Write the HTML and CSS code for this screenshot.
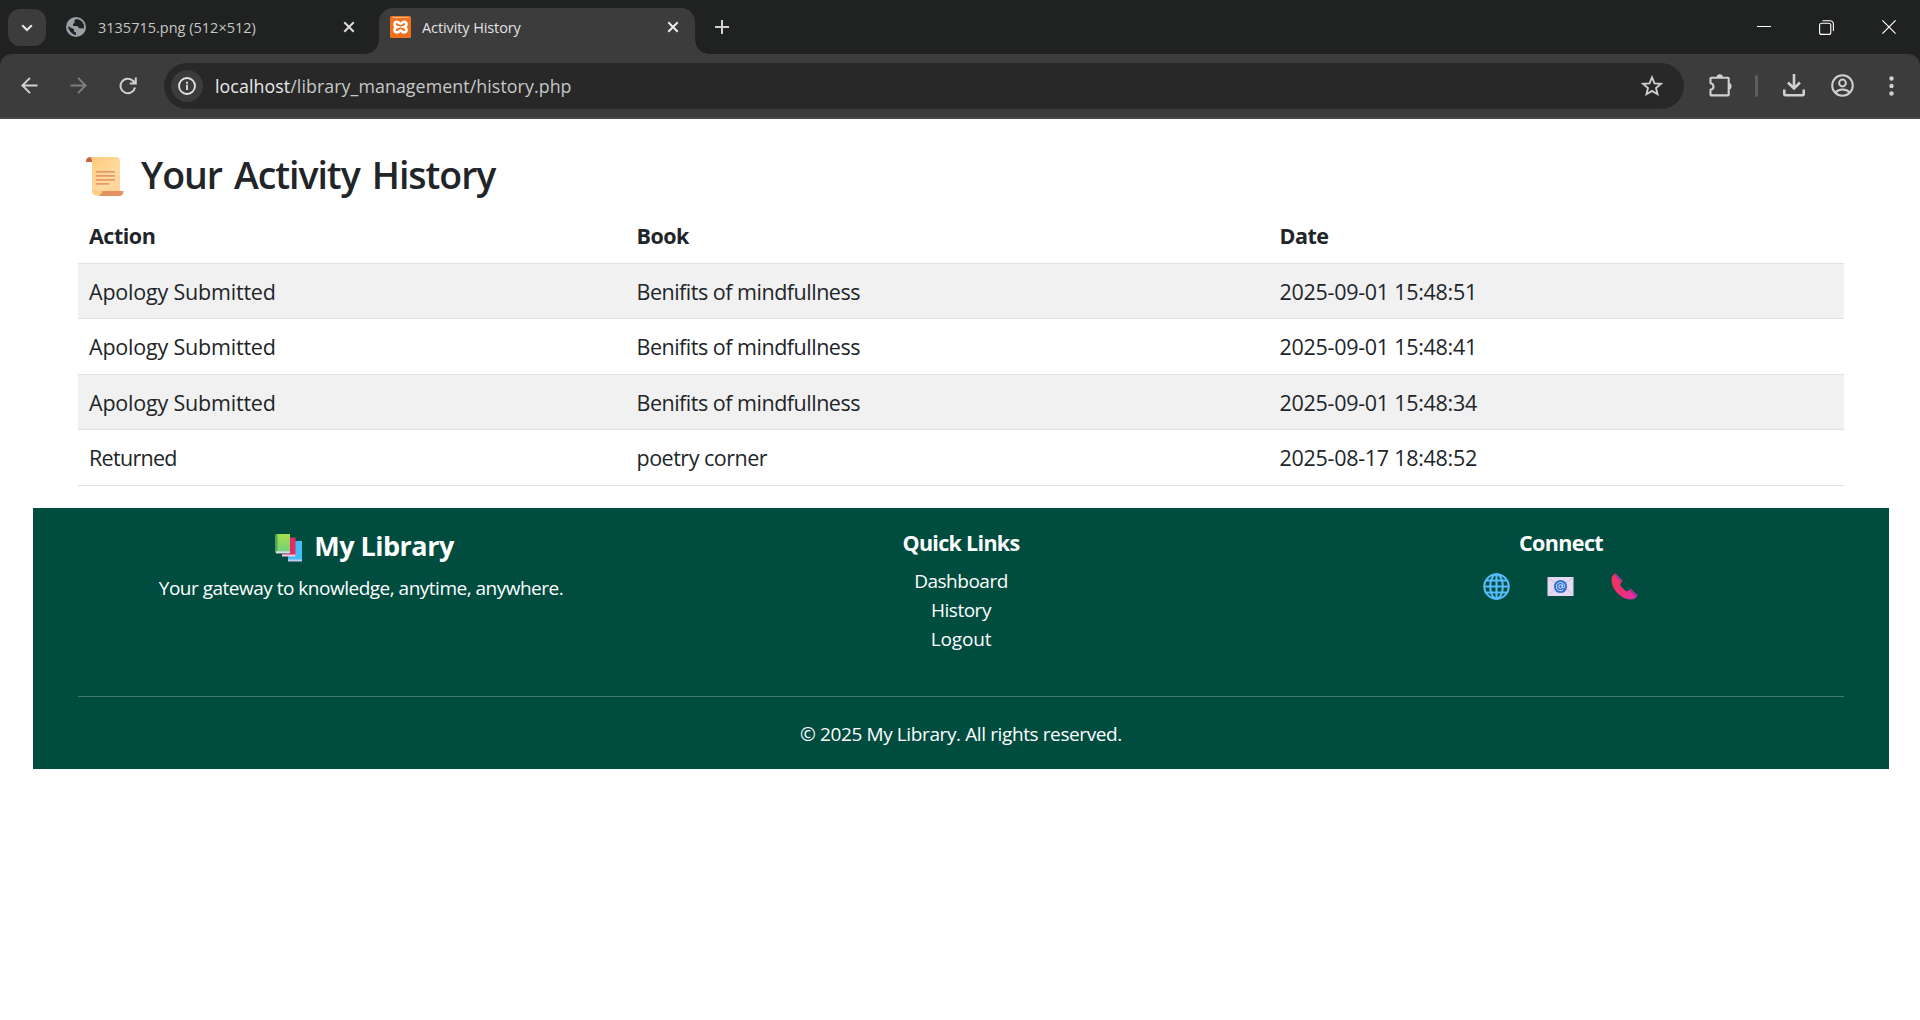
FILE: index.html
```html
<!DOCTYPE html>
<html lang="en">
<head>
<meta charset="utf-8">
<title>Activity History</title>
<link rel="stylesheet" href="styles.css">
</head>
<body>
<div class="tabstrip">
  <button class="tab-search"><svg width="12" height="8" viewBox="0 0 12 8"><path d="M1.2 1.2 6 6l4.800-4.800" fill="none" stroke="#e3e3e3" stroke-width="2.200"/></svg></button>
  <div class="tab">
    <svg class="favicon" width="20" height="20" viewBox="0 0 20 20"><circle cx="10" cy="10" r="10" fill="#9aa0a6"/><path d="M10.500 2C9 2.500 8 3.500 8.500 5c.3 1-.5 1.500-1.500 2L7.200 9h3.300c1.500 0 2.300 1 2.300 2.200h1.600c1.500 0 3 .6 3.600-.2A8 8 0 0 0 10.500 2ZM2 9.200C2.500 13 6 17.500 10 18v-2.500c-1.400 0-2-1-2-2v-1.200Z" fill="#202221"/></svg>
    <span class="tab-title">3135715.png (512×512)</span>
    <svg class="tab-close" width="12" height="12" viewBox="0 0 12 12"><path d="m1.300 1.300 9.400 9.400m0-9.400-9.400 9.400" stroke="#dcdcdc" stroke-width="2"/></svg>
  </div>
  <div class="tab tab-active">
    <svg class="favicon" width="21" height="22" viewBox="0 0 21 22"><rect width="21" height="22" rx="1.500" fill="#f0701c"/><path d="M2.500 1.500h16" stroke="#f7b58a" stroke-width="1.200"/><path d="M7.600 6C3.600 5 3.600 10 7 11c-3.600 1-3.200 6.200.6 5.300 1.800-.4 1.700-1.700 2.900-1.700s1.100 1.300 2.900 1.700c3.800.9 4.200-4.300.6-5.300 3.400-1 3.400-6-.6-5-1.800.4-1.700 1.800-2.900 1.800S9.400 6.400 7.600 6Z" fill="none" stroke="#fff" stroke-width="2.600"/></svg>
    <span class="tab-title tab-title-active">Activity History</span>
    <svg class="tab-close" width="12" height="12" viewBox="0 0 12 12"><path d="m1.300 1.300 9.400 9.400m0-9.400-9.400 9.400" stroke="#eee" stroke-width="2"/></svg>
  </div>
  <svg class="new-tab" width="14" height="14" viewBox="0 0 14 14"><path d="M7 0v14M0 7h14" stroke="#d0d0d0" stroke-width="2"/></svg>
  <div class="window-controls">
    <svg width="14" height="14" viewBox="0 0 14 14"><path d="M0 6.500h14" stroke="#fff"/></svg>
    <svg width="15" height="15" viewBox="0 0 15 15" fill="none" stroke="#fff" stroke-width="1.100"><rect x=".6" y="3.200" width="11.200" height="11.200" rx="2"/><path d="M3.500.7h7.300a3.600 3.600 0 0 1 3.600 3.600v6.800"/></svg>
    <svg width="14" height="14" viewBox="0 0 14 14"><path d="m.4.4 13.200 13.200m0-13.200L.4 13.600" stroke="#fff" stroke-width="1.200"/></svg>
  </div>
</div>
<div class="toolbar">
  <svg class="nav-back" width="17" height="17" viewBox="0 0 17 17" fill="none" stroke="#d0d0d0" stroke-width="2"><path d="M16.500 8.500H1.700M9 .9 1.400 8.500 9 16.100"/></svg>
  <svg class="nav-forward" width="17" height="17" viewBox="0 0 17 17" fill="none" stroke="#7d7d7d" stroke-width="2"><path d="M.5 8.500h14.800M8 .9l7.600 7.600L8 16.100"/></svg>
  <svg class="nav-reload" width="18" height="18" viewBox="0 0 18 18" fill="none" stroke="#d0d0d0" stroke-width="2"><path d="M16 10.500A7.300 7.300 0 1 1 14.200 4L16 6M16.800.5v6h-6"/></svg>
  <div class="omnibox">
    <span class="site-info"><svg width="18" height="18" viewBox="0 0 18 18"><circle cx="9" cy="9" r="8" fill="none" stroke="#e3e3e3" stroke-width="1.800"/><path d="M9 7.800V13M9 4.700v2" stroke="#e3e3e3" stroke-width="1.800"/></svg></span>
    <span class="url"><span class="url-host">localhost</span>/library_management/history.php</span>
    <svg class="star" width="22" height="21" viewBox="0 0 22 21"><path d="m11 2.300 2.500 6 6.400.5-4.900 4.200 1.500 6.200-5.500-3.300-5.500 3.300L7 13 2.100 8.800l6.400-.5Z" fill="none" stroke="#d0d0d0" stroke-width="1.800"/></svg>
  </div>
  <svg class="extensions" width="23" height="23" viewBox="0 0 23 23"><path d="M2.300 3.800H19q.7 0 .7.800v16q0 .8-.8.800H2.300q-.8 0-.8-.8v-4.800c4-.7 4-5.900 0-6.600V4.600q0-.8.800-.8Z" fill="none" stroke="#d0d0d0" stroke-width="2.100" stroke-linejoin="round"/><path d="M7.500 3.800a3.300 3.500 0 0 1 6.600 0ZM20 9a2.500 3.300 0 0 1 0 6.600Z" fill="#d0d0d0"/></svg>
  <span class="divider"></span>
  <svg class="download" width="22" height="23" viewBox="0 0 22 23" fill="none" stroke="#d0d0d0" stroke-width="2.600"><path d="M11 0v14M5 8.500l6 6 6-6M1.300 15.500v4.700q0 1 1 1h17.400q1 0 1-1v-4.700"/></svg>
  <svg class="profile" width="23" height="23" viewBox="0 0 23 23" fill="none" stroke="#d0d0d0" stroke-width="2"><circle cx="11.500" cy="11.500" r="10.300"/><circle cx="11.500" cy="9" r="3.400"/><path d="M4.300 18.500c4-4 10.400-4 14.400 0"/></svg>
  <svg class="menu" width="5" height="20" viewBox="0 0 5 20" fill="#d0d0d0"><circle cx="2.500" cy="2.500" r="2.200"/><circle cx="2.500" cy="10" r="2.200"/><circle cx="2.500" cy="17.500" r="2.200"/></svg>
</div>

<main class="content">
  <h2 class="heading">
    <svg class="scroll" width="38" height="39" viewBox="0 0 38 39">
      <defs><linearGradient id="paper" x1="0" y1="0" x2="1" y2="1"><stop offset="0" stop-color="#ffc97a"/><stop offset=".6" stop-color="#ffdaa0"/><stop offset="1" stop-color="#ffd292"/></linearGradient></defs>
      <path d="M0 4.500C0 1.500 1.500 0 5 0h6v5H0Z" fill="#c9633f"/>
      <path d="M4 0h26q4 0 4 4.500V34q0 4-3 4H11q-5 0-5-5V5Q6 1 4 0Z" fill="url(#paper)"/>
      <path d="M16 34h21.500q0 5-4.500 5H11q4-.5 5-5Z" fill="#e2935f"/>
      <path d="M6 33q0 5.500 5 5.500 4-.5 5-4.500Z" fill="#ffcf80"/>
      <path d="M10 14.800h19M10 18.800h19M10 22.800h19M10 26.800h13" stroke="#e39a6c" stroke-width="1.700"/>
    </svg>
    <span class="heading-text">Your Activity History</span>
  </h2>
  <table class="history">
    <thead><tr><th class="col-action">Action</th><th class="col-book">Book</th><th>Date</th></tr></thead>
    <tbody>
      <tr><td class="action">Apology Submitted</td><td>Benifits of mindfullness</td><td class="date">2025-09-01 15:48:51</td></tr>
      <tr><td class="action">Apology Submitted</td><td>Benifits of mindfullness</td><td class="date">2025-09-01 15:48:41</td></tr>
      <tr><td class="action">Apology Submitted</td><td>Benifits of mindfullness</td><td class="date">2025-09-01 15:48:34</td></tr>
      <tr><td class="returned">Returned</td><td>poetry corner</td><td class="date">2025-08-17 18:48:52</td></tr>
    </tbody>
  </table>
</main>

<footer class="footer">
  <div class="footer-columns">
    <section class="footer-col">
      <h5 class="brand">
        <svg width="28" height="28" viewBox="0 0 28 28">
          <defs><linearGradient id="green" x1="0" y1="0" x2="0" y2="1"><stop offset="0" stop-color="#a6de4c"/><stop offset="1" stop-color="#6fd07c"/></linearGradient></defs>
          <path d="M13 7h14v20H13Z" fill="#42bdf5"/><path d="M13 25.500h14v2H13Z" fill="#c9c8f5"/>
          <path d="M7 3.500h13.500V22H7Z" fill="#e12c63"/><path d="M7 20.500h13.500v2H7Z" fill="#f0c8e6"/>
          <path d="M1 0h14v19.500H1Z" fill="url(#green)"/><path d="M0 1 2.500 0v17L0 19Z" fill="#4da65a"/><path d="M1 17.300h14V19H1Z" fill="#e2d5f3"/><path d="M1 19h14v.8H1Z" fill="#5a9b77"/>
        </svg>
        <span>My Library</span>
      </h5>
      <p class="tagline">Your gateway to knowledge, anytime, anywhere.</p>
    </section>
    <section class="footer-col">
      <h6 class="footer-title">Quick Links</h6>
      <ul class="links"><li>Dashboard</li><li>History</li><li class="logout">Logout</li></ul>
    </section>
    <section class="footer-col">
      <h6 class="footer-title connect">Connect</h6>
      <div class="social">
        <svg width="27" height="27" viewBox="0 0 27 27" fill="none" stroke="#58bdfb" stroke-width="2.100"><circle cx="13.500" cy="13.500" r="12.200"/><ellipse cx="13.500" cy="13.500" rx="6.300" ry="12.200"/><path d="M13.500 1v25M1 13.500h25M3.500 7.500h20M3.500 19.500h20"/></svg>
        <svg width="27" height="27" viewBox="0 0 27 27"><rect x=".5" y="4" width="26" height="19" rx="1" fill="#e6d9f2"/><path d="m.5 22.500 10-9M26.500 22.500l-10-9M.5 4.500l13 9 13-9" fill="none" stroke="#cdbfe4" stroke-width="1"/><circle cx="13.500" cy="13.500" r="6.600" fill="#3474cf"/><path d="M16 16.800a4.100 4.100 0 1 1 1.600-3.300c0 2-2.200 2-2.200.2v-2.200" fill="none" stroke="#d5e1fa" stroke-width="1"/><circle cx="13.500" cy="13.500" r="1.800" fill="none" stroke="#d5e1fa"/></svg>
        <svg width="27" height="27" viewBox="0 0 27 27"><defs><linearGradient id="phone" x1="0" y1="0" x2="1" y2="1"><stop offset="0" stop-color="#f03a50"/><stop offset=".5" stop-color="#ee2f72"/><stop offset="1" stop-color="#e032b0"/></linearGradient></defs><path d="M2.500 1.500Q.3 3.500.5 7.500C1 17 10 26 19.500 26.500q4 .1 5.500-2l1.500-1.700-7-6.800-3.500 2.500C13 17 10.500 14.500 9 11.500L11.300 8 4.500.5Z" fill="url(#phone)"/><path d="m4.500.5 6.800 6.700-1.800 2L3 2.300ZM19.700 15.700l7 6.900-1.900 1.700-6.800-6.900Z" fill="#b5309a"/></svg>
      </div>
    </section>
  </div>
  <hr class="rule">
  <p class="copyright">© 2025 My Library. All rights reserved.</p>
</footer>
</body>
</html>
```
FILE: styles.css
```css
* { box-sizing: border-box; }
body {
  margin: 0;
  background: #fff;
  color: #212529;
  font-family: "Open Sans", "Noto Sans", sans-serif;
  font-size: 22px;
}
svg { display: block; flex: none; }
h2, h5, h6, p, ul { margin: 0; padding: 0; }

.tabstrip {
  display: flex;
  height: 54px;
  padding: 8px 24px 0 8px;
  background: #202221;
}
.tab-search {
  display: grid;
  place-items: center;
  width: 38px;
  height: 37px;
  margin: 1px 5px 0 0;
  padding: 0;
  border: 0;
  border-radius: 12px;
  background: #3c3c3c;
}
.tab {
  display: flex;
  align-items: center;
  width: 328px;
  height: 38px;
  padding: 0 24px 0 15px;
}
.tab-title {
  flex: 1;
  margin-left: 12px;
  color: #c7c7c7;
  font-size: 14.500px;
  letter-spacing: 0;
  white-space: nowrap;
}
.tab-active {
  position: relative;
  width: 316px;
  height: 46px;
  padding: 0 16px 8px 11px;
  border-radius: 14px 14px 0 0;
  background: #3c3c3c;
}
.tab-active::before,
.tab-active::after {
  content: "";
  position: absolute;
  bottom: 0;
  left: -14px;
  width: 14px;
  height: 14px;
  background: radial-gradient(circle at 0 0, transparent 13.500px, #3c3c3c 14px);
}
.tab-active::after { left: 100%; transform: scaleX(-1); }
.tab-title-active { margin-left: 11px; color: #e3e3e3; letter-spacing: -0.100px; }
.new-tab { margin: 12px 0 0 20px; }
.window-controls {
  display: flex;
  gap: 48px;
  margin: 12px 0 0 auto;
}

.toolbar {
  display: flex;
  align-items: center;
  height: 65px;
  padding: 0 26px 0 21px;
  border-bottom: 2px solid #474747;
  border-radius: 12px 12px 0 0;
  background: #3c3c3c;
  box-shadow: 0 -12px 0 0 #202221;
  clip-path: inset(0);
}
.nav-forward { margin-left: 32px; }
.nav-reload { margin-left: 32px; }
.omnibox {
  display: flex;
  align-items: center;
  width: 1520px;
  height: 46px;
  margin-left: 27px;
  padding: 0 21px 0 7px;
  border-radius: 23px;
  background: #282828;
}
.toolbar > svg, .omnibox, .divider { flex: none; }
.site-info {
  display: grid;
  place-items: center;
  width: 32px;
  height: 32px;
  border-radius: 50%;
  background: #3c3c3c;
}
.url { margin-left: 12px; color: #c7c7c7; font-size: 17.800px; letter-spacing: 0.080px; white-space: nowrap; }
.url-host { color: #e8e8e8; }
.star { margin-left: auto; }
.extensions { margin-left: 25px; }
.divider { width: 3px; height: 22px; margin-left: 23px; border-radius: 2px; background: #5e5e5e; }
.download { margin-left: 25px; }
.profile { margin-left: 26px; }
.menu { margin-left: 35px; }

.content { padding: 28px 76px 0 78px; }
.heading {
  display: flex;
  align-items: center;
  gap: 17px;
  height: 61px;
  padding: 0 0 5px 8px;
  font-size: 37.500px;
  font-weight: 600;
  line-height: 56px;
}
.scroll { margin-top: 3px; }
.heading-text { letter-spacing: -1.060px; word-spacing: 3.500px; }
.history {
  width: 100%;
  table-layout: fixed;
  border-collapse: separate;
  border-spacing: 0;
}
.history th,
.history td {
  height: 55.500px;
  padding: 2px 11px 0;
  border-bottom: 1px solid #dee2e6;
  text-align: left;
  font-size: 21.500px;
  letter-spacing: -0.490px;
  line-height: 30px;
}
.history .action { letter-spacing: -0.200px; }
.history .returned { letter-spacing: -0.700px; }
.history .date { letter-spacing: -0.280px; }
.history th { font-weight: 700; }
.history tbody tr:nth-child(odd) { background: #f1f1f1; }
.col-action { width: 547.500px; }
.col-book { width: 643px; }

.footer {
  height: 261px;
  margin: 22px 31px 0 33px;
  padding: 0 45px;
  background: #004d40;
  color: #fff;
}
.footer-columns {
  display: grid;
  grid-template-columns: 566px 634px 566px;
  height: 188px;
  padding-top: 20px;
  text-align: center;
}
.brand {
  display: flex;
  justify-content: center;
  align-items: center;
  gap: 11px;
  padding-left: 7px;
  font-size: 27px;
  letter-spacing: -0.500px;
  line-height: 36px;
}
.brand svg { margin-top: 5px; }
.tagline, .links, .copyright { font-size: 19px; letter-spacing: -0.500px; line-height: 29px; }
.tagline { margin-top: 10px; }
.footer-title { font-size: 21.500px; letter-spacing: -0.690px; line-height: 30px; }
.connect { letter-spacing: -0.600px; }
.links { margin-top: 9px; list-style: none; }
.logout { letter-spacing: -0.150px; }
.social { display: flex; justify-content: center; gap: 37px; margin: 15px 2px 0 0; }
.rule { height: 1px; margin: 0; border: 0; background: #407a70; }
.copyright { margin-top: 23px; letter-spacing: -0.390px; text-align: center; }
```
